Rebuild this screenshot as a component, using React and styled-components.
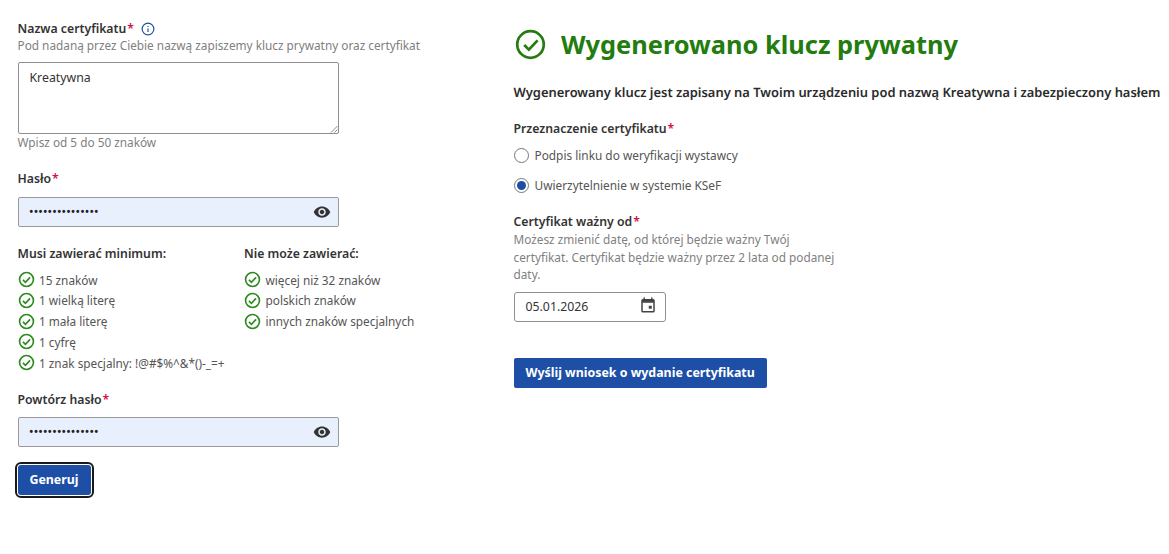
import React from "react";
import styled, { createGlobalStyle } from "styled-components";

const Global = createGlobalStyle`
  html, body { margin: 0; padding: 0; background: #fff; }
  body { font-family: "Noto Sans", "Liberation Sans", sans-serif; color: #333; overflow: hidden; }
  * { box-sizing: border-box; }
`;

const Page = styled.div`
  width: 1169px;
  height: 554px;
  display: flex;
  align-items: flex-start;
  padding-left: 17.5px;
  overflow: hidden;
`;
const LeftColumn = styled.form`
  width: 496px;
  flex: none;
  padding-top: 20px;
  display: flex;
  flex-direction: column;
`;
const RightColumn = styled.section`
  flex: 1;
  min-width: 0;
  padding-top: 28px;
  display: flex;
  flex-direction: column;
`;
const Label = styled.div`
  display: flex;
  align-items: center;
  height: 17px;
  font-size: 12.25px;
  font-weight: 600;
  color: #333;
  white-space: nowrap;
`;
const Star = styled.span`
  color: #d5103f;
  margin-left: 1px;
`;
const InfoIcon = styled.svg`
  width: 14px;
  height: 14px;
  margin-left: 7px;
  color: #1c4fa5;
`;
const Hint = styled.div`
  font-size: 11.8px;
  line-height: 17.6px;
  color: #808080;
`;
const TextArea = styled.div`
  position: relative;
  width: 321.5px;
  height: 72px;
  margin-top: 7.5px;
  padding: 6px 11px;
  border: 1px solid #8f8f8f;
  border-radius: 2px;
  font-size: 12.3px;
  line-height: 18px;
  color: #333;
`;
const Grip = styled.svg`
  position: absolute;
  right: 0;
  bottom: 0;
  width: 8px;
  height: 8px;
  color: #888;
`;
const Field = styled.div`
  margin-top: ${(p) => p.$top}px;
`;
const PasswordBox = styled.div`
  width: 321.5px;
  height: 30px;
  margin-top: 10px;
  padding: 0 7px 0 11px;
  display: flex;
  align-items: center;
  justify-content: space-between;
  background: #e8f0fe;
  border: 1px solid #9a9a9a;
  border-radius: 2px;
`;
const RepeatBox = styled(PasswordBox)`
  margin-top: 9px;
`;
const Dots = styled.span`
  font-family: "Liberation Sans", sans-serif;
  font-size: 10px;
  letter-spacing: 1.15px;
  font-weight: 700;
  color: #222;
`;
const EyeIcon = styled.svg`
  width: 18px;
  height: 18px;
  color: #333;
  flex: none;
`;
const Rules = styled.div`
  display: flex;
  margin-top: 18px;
`;
const RuleColumn = styled.div`
  width: ${(p) => p.$width}px;
  flex: none;
`;
const RuleItems = styled.ul`
  list-style: none;
  margin: 7.5px 0 0;
  padding: 0;
`;
const RuleItem = styled.li`
  display: flex;
  align-items: center;
  height: 20.75px;
  font-size: 11.8px;
  color: #555;
  white-space: nowrap;
`;
const CheckIcon = styled.svg`
  width: 17px;
  height: 17px;
  margin-right: 4.5px;
  flex: none;
  color: #2c8a1e;
`;
const Button = styled.button`
  display: block;
  height: 30px;
  padding: 0 12px;
  border: 0;
  border-radius: 2px;
  background: #1c4fa5;
  color: #fff;
  font-family: inherit;
  font-size: 12.4px;
  font-weight: 700;
  white-space: nowrap;
`;
const FocusedButton = styled(Button)`
  width: 73px;
  margin-top: 18px;
  padding: 0;
  outline: 2.5px solid #1a1a1a;
  outline-offset: 1px;
  border-radius: 3px;
`;
const Heading = styled.h1`
  margin: 0 0 0 1.5px;
  display: flex;
  align-items: center;
  gap: 15px;
  height: 32px;
  font-size: 25.4px;
  font-weight: 700;
  color: #227c0e;
  white-space: nowrap;
`;
const BigCheck = styled.svg`
  width: 31px;
  height: 31px;
  flex: none;
`;
const Lead = styled.p`
  margin: 23px 0 0;
  font-size: 12.92px;
  line-height: 18px;
  font-weight: 600;
  color: #2b2b2b;
  white-space: nowrap;
  text-rendering: geometricPrecision;
`;
const PurposeField = styled.div`
  margin-top: 19px;
`;
const RadioRow = styled.label`
  display: flex;
  align-items: center;
  height: 30px;
  font-size: 11.85px;
  color: #555;
  gap: 6px;
`;
const RadioList = styled.div`
  margin-top: 3px;
`;
const RadioCircle = styled.span`
  width: 15px;
  height: 15px;
  border-radius: 50%;
  border: 1px solid #777;
  display: flex;
  align-items: center;
  justify-content: center;
  &::after {
    content: "";
    display: ${(p) => (p.$checked ? "block" : "none")};
    width: 9px;
    height: 9px;
    border-radius: 50%;
    background: #1c4fa5;
  }
`;
const DateHint = styled(Hint)`
  width: 330px;
  margin-top: 1px;
`;
const DateBox = styled.div`
  width: 152px;
  height: 30px;
  margin-top: 8px;
  padding: 0 8px 0 11px;
  display: flex;
  align-items: center;
  justify-content: space-between;
  border: 1px solid #8f8f8f;
  border-radius: 3px;
  font-size: 12.3px;
  color: #333;
`;
const CalendarIcon = styled.svg`
  width: 18px;
  height: 18px;
  color: #444;
  margin-top: -3px;
`;
const SubmitButton = styled(Button)`
  margin-top: 36px;
  padding: 0 12px;
`;

const Eye = () => (
  <EyeIcon viewBox="0 0 24 24" fill="currentColor">
    <path d="M12 4.5C7 4.5 2.73 7.61 1 12c1.73 4.39 6 7.5 11 7.5s9.27-3.11 11-7.5c-1.73-4.39-6-7.5-11-7.5zM12 17c-2.76 0-5-2.24-5-5s2.24-5 5-5 5 2.24 5 5-2.24 5-5 5zm0-8c-1.66 0-3 1.34-3 3s1.34 3 3 3 3-1.34 3-3-1.34-3-3-3z" />
  </EyeIcon>
);

const Check = () => (
  <CheckIcon viewBox="0 0 24 24" fill="none" stroke="currentColor" strokeWidth="2.3">
    <circle cx="12" cy="12" r="9.8" />
    <path d="M7 12.5l3.5 3.5L17 9" />
  </CheckIcon>
);

const Rule = ({ children }) => (
  <RuleItem>
    <Check />
    {children}
  </RuleItem>
);

export default function App() {
  return (
    <Page>
      <Global />
      <LeftColumn>
        <Label>
          Nazwa certyfikatu<Star>*</Star>
          <InfoIcon viewBox="0 0 24 24" fill="none" stroke="currentColor" strokeWidth="2">
            <circle cx="12" cy="12" r="10" />
            <path d="M12 11v6M12 7v1.6" />
          </InfoIcon>
        </Label>
        <Hint>Pod nadaną przez Ciebie nazwą zapiszemy klucz prywatny oraz certyfikat</Hint>
        <TextArea>
          Kreatywna
          <Grip viewBox="0 0 8 8" stroke="currentColor" fill="none">
            <path d="M7.5 1L1 7.5M7.5 4.5L4.5 7.5" />
          </Grip>
        </TextArea>
        <Hint>Wpisz od 5 do 50 znaków</Hint>
        <Field $top={18}>
          <Label>Hasło<Star>*</Star></Label>
          <PasswordBox>
            <Dots>•••••••••••••••</Dots>
            <Eye />
          </PasswordBox>
        </Field>
        <Rules>
          <RuleColumn $width={226.5}>
            <Label>Musi zawierać minimum:</Label>
            <RuleItems>
              <Rule>15 znaków</Rule>
              <Rule>1 wielką literę</Rule>
              <Rule>1 mała literę</Rule>
              <Rule>1 cyfrę</Rule>
              <Rule>1 znak specjalny: !@#$%^&*()-_=+</Rule>
            </RuleItems>
          </RuleColumn>
          <RuleColumn $width={220}>
            <Label>Nie może zawierać:</Label>
            <RuleItems>
              <Rule>więcej niż 32 znaków</Rule>
              <Rule>polskich znaków</Rule>
              <Rule>innych znaków specjalnych</Rule>
            </RuleItems>
          </RuleColumn>
        </Rules>
        <Field $top={18}>
          <Label>Powtórz hasło<Star>*</Star></Label>
          <RepeatBox>
            <Dots>•••••••••••••••</Dots>
            <Eye />
          </RepeatBox>
        </Field>
        <FocusedButton type="button">Generuj</FocusedButton>
      </LeftColumn>
      <RightColumn>
        <Heading>
          <BigCheck viewBox="0 0 32 32" fill="none" stroke="#227c0e" strokeWidth="2.8">
            <circle cx="16" cy="16" r="13.7" />
            <path d="M9.5 16.5l4.8 4.8 9-9.6" />
          </BigCheck>
          Wygenerowano klucz prywatny
        </Heading>
        <Lead>Wygenerowany klucz jest zapisany na Twoim urządzeniu pod nazwą Kreatywna i zabezpieczony hasłem</Lead>
        <PurposeField>
          <Label>Przeznaczenie certyfikatu<Star>*</Star></Label>
          <RadioList>
            <RadioRow><RadioCircle />Podpis linku do weryfikacji wystawcy</RadioRow>
            <RadioRow><RadioCircle $checked />Uwierzytelnienie w systemie KSeF</RadioRow>
          </RadioList>
        </PurposeField>
        <Field $top={13}>
          <Label>Certyfikat ważny od<Star>*</Star></Label>
          <DateHint>Możesz zmienić datę, od której będzie ważny Twój certyfikat. Certyfikat będzie ważny przez 2 lata od podanej daty.</DateHint>
          <DateBox>
            05.01.2026
            <CalendarIcon viewBox="0 0 24 24" fill="currentColor">
              <path d="M19 4h-1V2h-2v2H8V2H6v2H5a2 2 0 0 0-2 2v14a2 2 0 0 0 2 2h14a2 2 0 0 0 2-2V6a2 2 0 0 0-2-2zm0 16H5V9h14v11zM13 13h4v4h-4z" />
            </CalendarIcon>
          </DateBox>
        </Field>
        <div>
          <SubmitButton type="button">Wyślij wniosek o wydanie certyfikatu</SubmitButton>
        </div>
      </RightColumn>
    </Page>
  );
}
